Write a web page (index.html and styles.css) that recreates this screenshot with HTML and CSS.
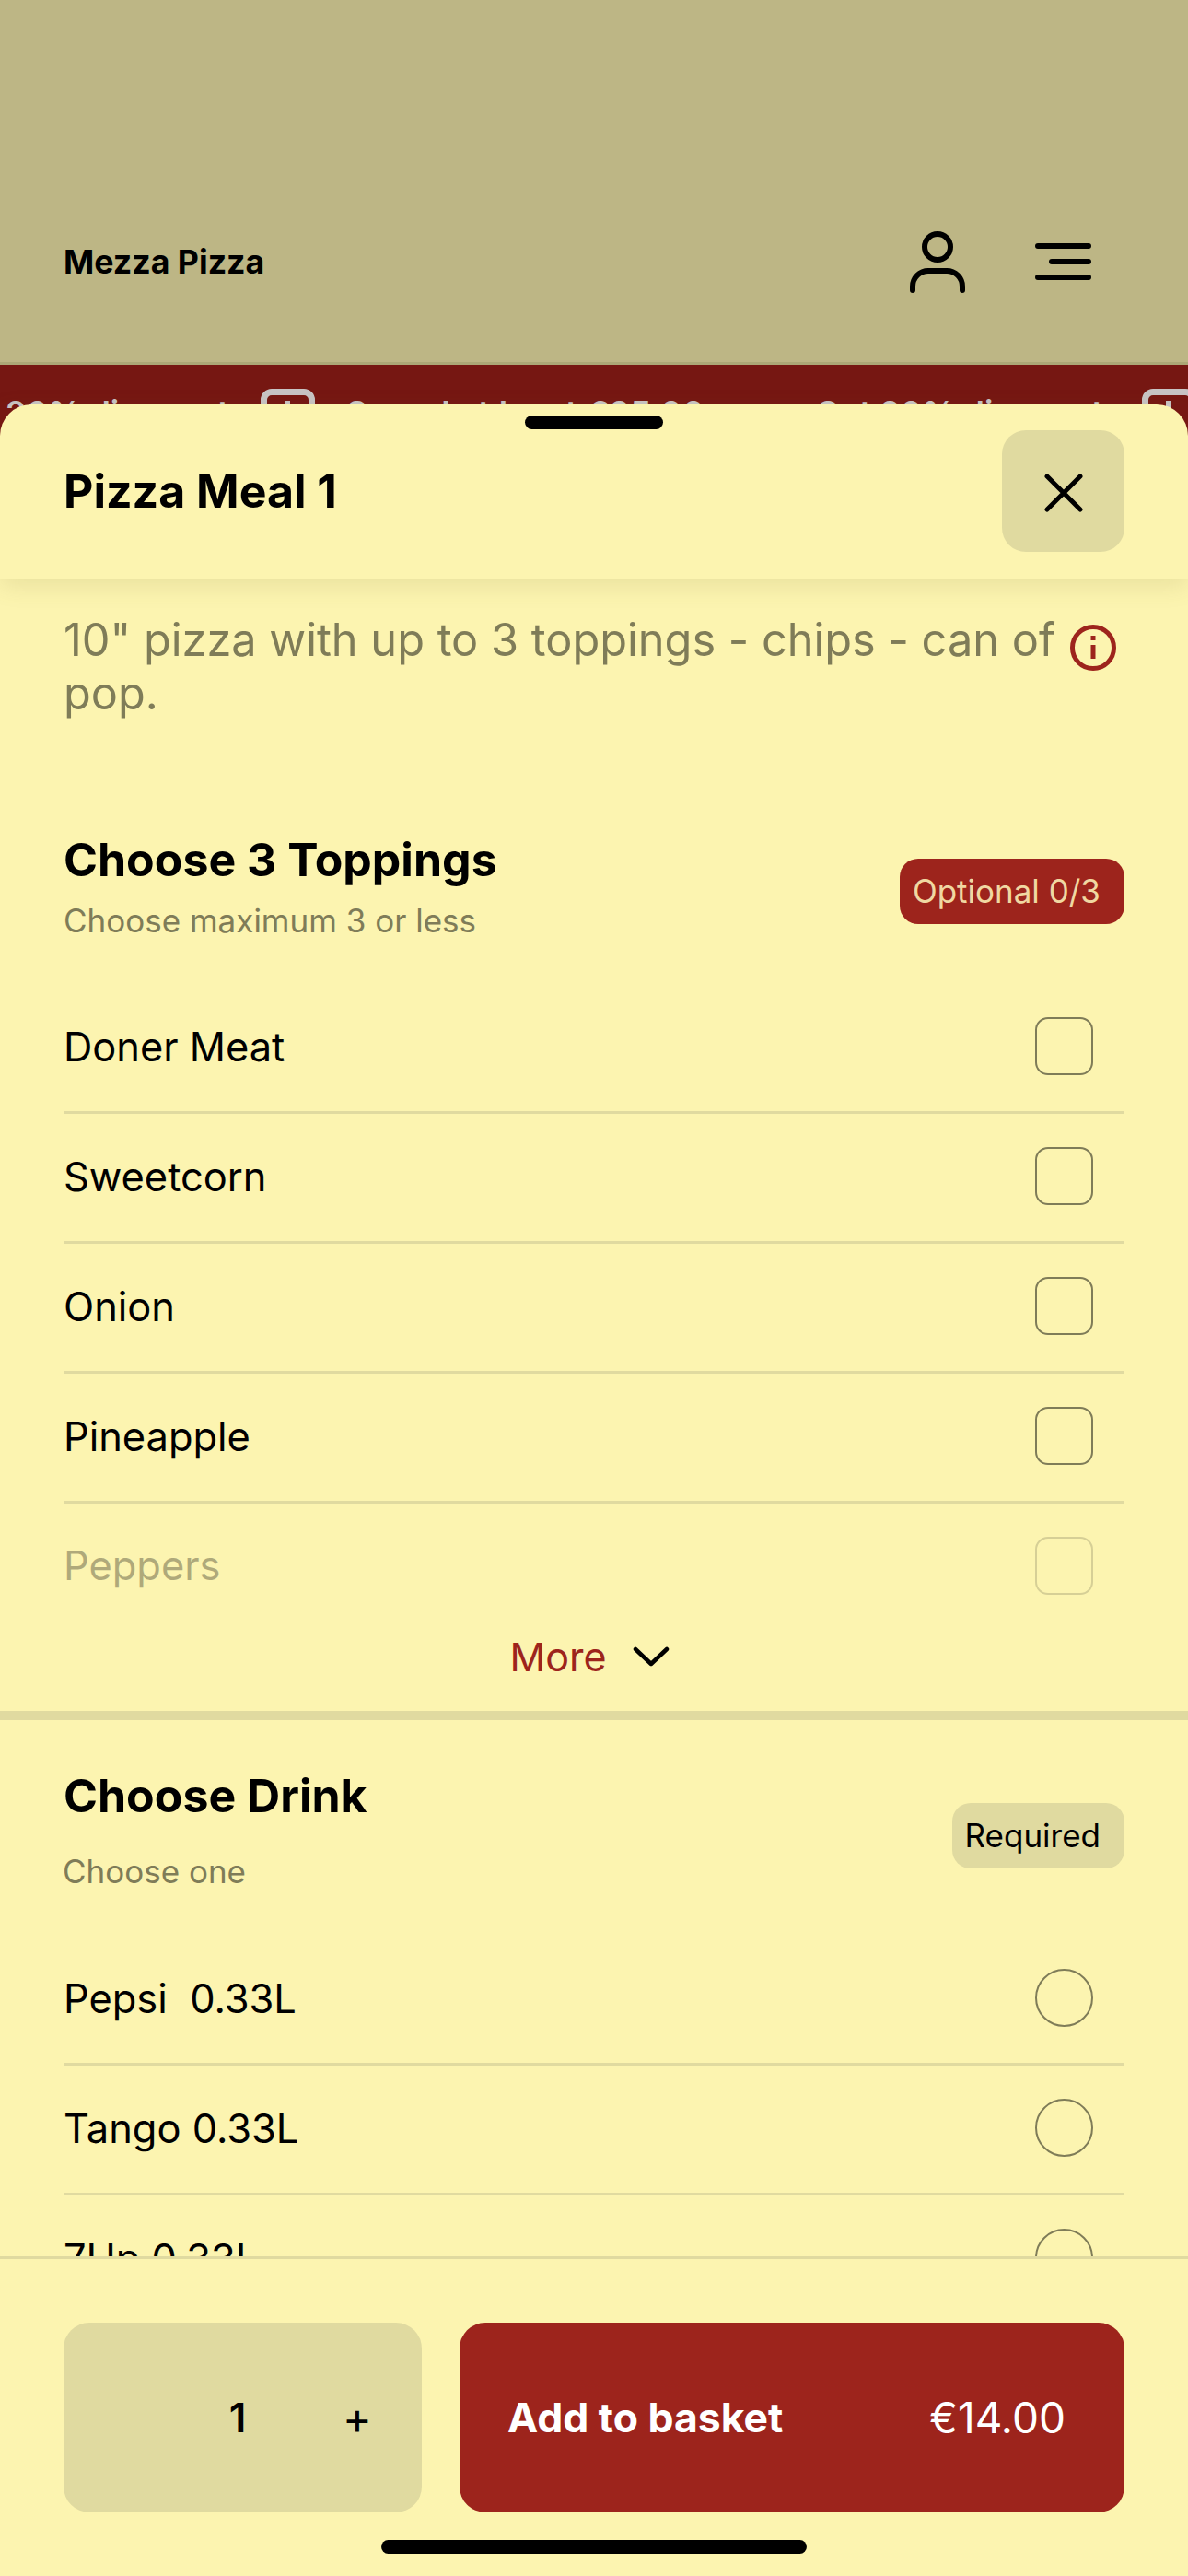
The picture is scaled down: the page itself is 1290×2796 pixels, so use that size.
FILE: index.html
```html
<!DOCTYPE html>
<html lang="en">

<head>
    <meta charset="UTF-8">
    <meta name="viewport" content="width=device-width, initial-scale=1.0">
    <title>Pizza Meal 1</title>
    <link rel="stylesheet" href="styles.css">
</head>

<body>
    <div class="page">
        <header class="topbar">
            <span class="brand">Mezza Pizza</span>
            <div class="topIcons">
                <svg class="userIcon" viewBox="0 0 62 68" fill="none" stroke="#000" stroke-width="6" stroke-linecap="round">
                    <circle cx="31" cy="18" r="14" />
                    <path d="M4 65v-4a17 17 0 0 1 17-17h20a17 17 0 0 1 17 17v4" />
                </svg>
                <svg class="menuIcon" viewBox="0 0 61 40" fill="none" stroke="#000" stroke-width="6" stroke-linecap="round">
                    <path d="M3 3h55M18 20h40M3 37h55" />
                </svg>
            </div>
        </header>
        <div class="promo">
            <span class="promoText">20% discount</span>
            <span class="promoBox"></span>
            <span class="promoText promoSpend">Spend at least €25.00</span>
            <span class="promoText promoNext">Get 20% discount</span>
            <span class="promoBox promoBoxLast"></span>
        </div>

        <div class="sheet">
            <div class="handle"></div>
            <div class="sheetHead">
                <h1>Pizza Meal 1</h1>
                <button class="closeBtn">
                    <svg viewBox="0 0 42 42" fill="none" stroke="#000" stroke-width="5" stroke-linecap="round">
                        <path d="M3 3l36 36M39 3L3 39" />
                    </svg>
                </button>
            </div>

            <div class="scroll">
                <div class="desc">
                    <p>10" pizza with up to 3 toppings - chips - can of pop.</p>
                    <svg class="infoIcon" viewBox="0 0 50 50" fill="none" stroke="#9d241c" stroke-width="5">
                        <circle cx="25" cy="25" r="22.5" />
                        <path d="M25 22v15" />
                        <path d="M25 12v5" />
                    </svg>
                </div>

                <section class="group">
                    <div class="groupHead">
                        <div>
                            <h2>Choose 3 Toppings</h2>
                            <p class="hint">Choose maximum 3 or less</p>
                        </div>
                        <span class="chip chipRed">Optional 0/3</span>
                    </div>
                    <div class="row"><span>Doner Meat</span><i class="check"></i></div>
                    <div class="row"><span>Sweetcorn</span><i class="check"></i></div>
                    <div class="row"><span>Onion</span><i class="check"></i></div>
                    <div class="row"><span>Pineapple</span><i class="check"></i></div>
                    <div class="row rowFaded"><span>Peppers</span><i class="check"></i></div>
                    <div class="more">
                        <span>More</span>
                        <svg viewBox="0 0 40 22" fill="none" stroke="#000" stroke-width="4.5" stroke-linecap="round" stroke-linejoin="round">
                            <path d="M3 3l17 16L37 3" />
                        </svg>
                    </div>
                </section>

                <section class="group groupDrink">
                    <div class="groupHead groupHeadDrink">
                        <div>
                            <h2>Choose Drink</h2>
                            <p class="hint hintDrink">Choose one</p>
                        </div>
                        <span class="chip chipDrink">Required</span>
                    </div>
                    <div class="row"><span>Pepsi&nbsp; 0.33L</span><i class="radio"></i></div>
                    <div class="row"><span>Tango 0.33L</span><i class="radio"></i></div>
                    <div class="row"><span>7Up 0.33L</span><i class="radio"></i></div>
                </section>
            </div>

            <div class="foot">
                <div class="qty">
                    <span class="qtyNum">1</span>
                    <span class="qtyPlus">+</span>
                </div>
                <button class="addBtn">
                    <span class="addLabel">Add to basket</span>
                    <span class="addPrice">€14.00</span>
                </button>
            </div>
            <div class="homeBar"></div>
        </div>
    </div>
</body>

</html>
```

FILE: styles.css
```css
* {
    box-sizing: border-box;
}

body {
    margin: 0;
    background-color: #fcf4b0;
    font-family: Inter, "Liberation Sans", sans-serif;
    color: #000;
}

.page {
    position: relative;
    width: 1290px;
    height: 2796px;
    overflow: hidden;
}

.topbar {
    height: 396px;
    padding: 172px 105px 0 69px;
    background-color: #bdb685;
    border-bottom: 3px solid #aca776;
    display: flex;
    justify-content: space-between;
    align-items: center;
}

.brand {
    font-size: 35.7px;
    font-weight: 700;
    margin-top: 3px;
}

.topIcons {
    display: flex;
    align-items: center;
    gap: 75px;
    margin-top: 3px;
}

.userIcon {
    width: 62px;
    height: 68px;
}

.menuIcon {
    width: 61px;
    height: 40px;
}

.promo {
    height: 110px;
    background-color: #761712;
    color: #c8c4c4;
    font-size: 36px;
    font-weight: 600;
    white-space: nowrap;
    display: flex;
    align-items: flex-start;
    gap: 34px;
    padding-left: 6px;
}

.promoText {
    margin-top: 30px;
}

.promoSpend {
    letter-spacing: 0.3px;
}

.promoNext {
    margin-left: 86px;
}

.promoBox {
    width: 59px;
    height: 59px;
    flex-shrink: 0;
    margin-top: 26px;
    border: 7px solid #c8c4c4;
    border-radius: 12px;
    display: flex;
    justify-content: center;
}

.promoBoxLast {
    margin-left: 8px;
}

.promoBox::after {
    content: "";
    width: 6px;
    height: 12px;
    margin-top: 6px;
    background-color: #c8c4c4;
}

.sheet {
    position: absolute;
    top: 439px;
    left: 0;
    right: 0;
    bottom: 0;
    background-color: #fcf4b0;
    border-radius: 34px 34px 0 0;
    display: flex;
    flex-direction: column;
}

.handle {
    position: absolute;
    top: 12px;
    left: 570px;
    width: 150px;
    height: 15px;
    background-color: #000;
    border-radius: 8px;
}

.sheetHead {
    height: 189px;
    flex-shrink: 0;
    padding: 28px 69px 29px 69px;
    display: flex;
    justify-content: space-between;
    align-items: center;
    box-shadow: 0 8px 24px rgba(120, 110, 50, 0.14);
    position: relative;
    z-index: 1;
}

h1 {
    margin: 0;
    font-size: 50px;
    font-weight: 700;
}

.closeBtn {
    width: 133px;
    height: 132px;
    border: none;
    padding: 3px 0 0;
    background-color: #e0daa0;
    border-radius: 26px;
    display: flex;
    align-items: center;
    justify-content: center;
}

.closeBtn svg {
    width: 42px;
    height: 42px;
}

.scroll {
    flex: 1;
    min-height: 0;
    overflow: hidden;
}

.desc {
    padding: 38px 69px 0 69px;
    display: flex;
    align-items: flex-start;
    gap: 8px;
    height: 275px;
}

.desc p {
    margin: 0;
    flex: 1;
    font-size: 48.7px;
    line-height: 58px;
    color: #7f7c58;
}

.infoIcon {
    width: 50px;
    height: 50px;
    flex-shrink: 0;
    margin: 12px 9px 0 0;
}

.group {
    padding: 0 69px;
}

.groupHead {
    display: flex;
    justify-content: space-between;
    align-items: flex-start;
    height: 165px;
}

.groupHeadDrink {
    height: 182px;
}

h2 {
    margin: 0;
    font-size: 50px;
    line-height: 60px;
    font-weight: 700;
}

.hint {
    margin: 15px 0 0;
    font-size: 35px;
    line-height: 42px;
    color: #7f7c58;
}

.hintDrink {
    margin: 31px 0 0 -1px;
}

.chip {
    margin-top: 29px;
    padding: 0 26px 2px 14px;
    height: 71px;
    border-radius: 20px;
    background-color: #e0daa0;
    font-size: 35px;
    display: flex;
    align-items: center;
}

.chipDrink {
    margin-top: 38px;
}

.chipRed {
    background-color: #9d241c;
    color: #f0d8a2;
}

.row {
    height: 141px;
    display: flex;
    justify-content: space-between;
    align-items: center;
    font-size: 43.4px;
    border-bottom: 3px solid #e0daa0;
    padding: 0 34px 3px 0;
}

.check,
.radio {
    width: 63px;
    height: 63px;
    border: 2px solid #7f7c58;
}

.check {
    border-radius: 14px;
}

.radio {
    border-radius: 50%;
}

.rowFaded {
    border-bottom: none;
    height: 137px;
    opacity: 0.3;
}

.more {
    display: flex;
    justify-content: center;
    align-items: center;
    gap: 28px;
    height: 58px;
    margin-left: -10px;
    font-size: 43px;
    color: #9d241c;
}

.more svg {
    width: 40px;
    height: 22px;
}

.groupDrink {
    border-top: 10px solid #e0daa0;
    margin-top: 30px;
    padding-top: 52px;
}

.foot {
    flex-shrink: 0;
    height: 347px;
    padding: 69px 69px 0 69px;
    border-top: 3px solid #e0daa0;
    display: flex;
    align-items: flex-start;
    gap: 41px;
}

.qty {
    width: 389px;
    height: 206px;
    flex-shrink: 0;
    background-color: #e0daa0;
    border-radius: 28px;
    display: flex;
    align-items: center;
}

.qtyNum {
    width: 60px;
    margin-left: 159px;
    text-align: center;
    font-size: 44px;
    font-weight: 600;
}

.qtyPlus {
    width: 60px;
    margin-left: 70px;
    text-align: center;
    font-size: 48px;
}

.addBtn {
    flex: 1;
    height: 206px;
    border: none;
    padding: 0 64px 0 52px;
    background-color: #9d241c;
    border-radius: 28px;
    color: #fff;
    font-family: inherit;
    font-size: 44.5px;
    display: flex;
    align-items: center;
    justify-content: space-between;
}

.addPrice {
    font-size: 46px;
}

.addLabel {
    font-weight: 700;
}

.homeBar {
    position: absolute;
    left: 414px;
    bottom: 24px;
    width: 462px;
    height: 15px;
    background-color: #000;
    border-radius: 8px;
}
```
